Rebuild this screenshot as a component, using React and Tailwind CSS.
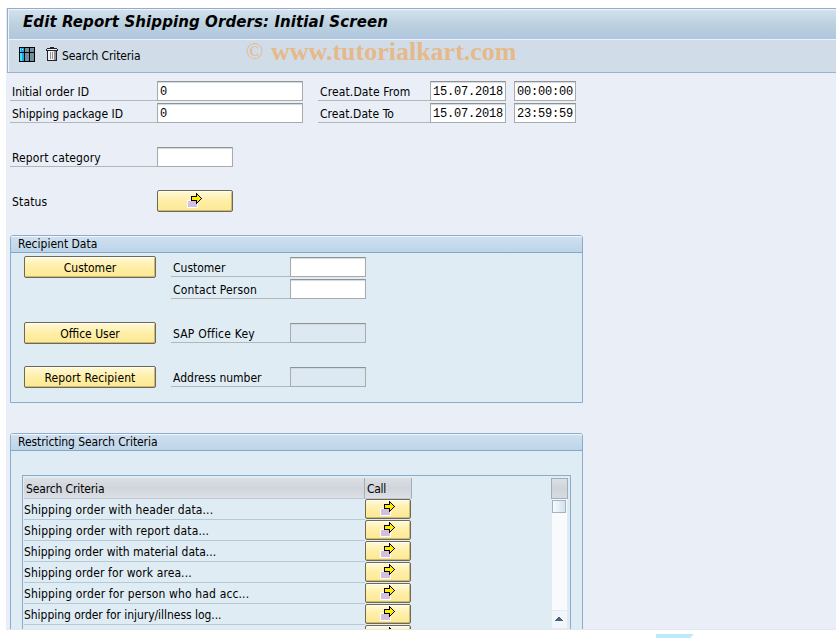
const SANS = "font-['DejaVu_Sans_Condensed','DejaVu_Sans',sans-serif] [font-stretch:condensed]";

const criteria = [
  { text: "Shipping order with header data...", spacing: "tracking-[0.12px]" },
  { text: "Shipping order with report data...", spacing: "tracking-[0.15px]" },
  { text: "Shipping order with material data...", spacing: "tracking-normal" },
  { text: "Shipping order for work area...", spacing: "tracking-[0.09px]" },
  { text: "Shipping order for person who had acc...", spacing: "tracking-[0.14px]" },
  { text: "Shipping order for injury/illness log...", spacing: "tracking-[-0.04px]" },
  { text: "", spacing: "tracking-normal" },
];

const ArrowIcon = ({ className = "" }) => (
  <svg width="16" height="15" viewBox="-1 0 16 15" shapeRendering="crispEdges" className={className}>
    <path d="M-1 7h11v8H-1z" fill="#fff" />
    <path d="M0 8h9v6H0z" fill="#d5bfdf" />
    <path d="M3 3h5V0h1v1h1v1h1v1h1v1h1v1h1v1h-1v1h-1v1h-1v1h-1v1H9v1H8V8H3z" fill="#000" />
    <path d="M4 4h5V2h1v1h1v1h1v1h1v1h-1v1h-1v1h-1v1H9V7H4z" fill="#ffeb00" />
  </svg>
);

const TableIcon = () => (
  <svg width="16" height="16" viewBox="0 0 16 16" shapeRendering="crispEdges">
    <path d="M0 0h16v15H0z" fill="#000" />
    <path d="M1 1h4v4H1zM1 6h4v8H1z" fill="#1ea4ee" />
    <path d="M1 1h1v4H1zM1 6h2v8H1z" fill="#3fe0fb" />
    <path d="M3 2h1v1H3z" fill="#fff" />
    <path d="M6 1h4v4H6zM11 1h4v4h-4zM6 6h4v8H6zM11 6h4v8h-4z" fill="#73909f" />
  </svg>
);

const TrashIcon = () => (
  <svg width="12" height="14" viewBox="0 0 12 14" shapeRendering="crispEdges">
    <path d="M4 0h4v1h3v1h1v2h-1v10H1V4H0V2h1V1h3z" fill="#222" />
    <path d="M1 2h10v1H1zM2 4h8v9H2z" fill="#f1f1f1" />
    <path d="M4 5h1v7H4zM6 5h1v7H6zM8 4h2v9H8z" fill="#8d8f94" />
    <path d="M0 4h1v10H0zM11 4h1v10h-1z" fill="#d0dde8" />
  </svg>
);

const Input = ({ value = "", disabled = false, className = "" }) => (
  <div
    className={`h-5 shrink-0 border border-[#a7abae] border-t-[#8f9396] pl-[2px] font-['Liberation_Mono',monospace] text-[12px] leading-[20px] tracking-[-0.2px] whitespace-nowrap text-black shadow-[inset_0_1px_1px_#d5d9dc] ${
      disabled ? "bg-[#dce9f3]" : "bg-white"
    } ${className}`}
  >
    {value}
  </div>
);

const Label = ({ children, className = "" }) => (
  <div className={`h-5 shrink-0 border-b border-[#b2b7ba] pl-[2px] leading-[22px] whitespace-nowrap ${className}`}>
    {children}
  </div>
);

const Button = ({ children, className = "" }) => (
  <button
    className={`flex shrink-0 justify-center rounded-[2px] border border-[#6d6857] bg-linear-to-b from-[#fff9d8] via-[#ffeea6] to-[#fbe993] shadow-[inset_0_1px_0_#fffdf0,inset_-1px_-1px_0_#cdb972] ${className}`}
  >
    {children}
  </button>
);

const Group = ({ title, children, className = "" }) => (
  <section className={`ml-1 w-[573px] rounded-t-[3px] border border-[#8bacca] bg-[#dfecf4] ${className}`}>
    <h2 className="h-[17px] rounded-t-[2px] border-b border-[#87a6c6] bg-linear-to-b from-[#cfe0f0] to-[#bdd5ea] pl-[7px] leading-[16px] shadow-[inset_0_1px_0_#f1f7fc]">
      {title}
    </h2>
    {children}
  </section>
);

const RecipientRow = ({ button, label, disabled, labelClass = "", className = "" }) => (
  <div className={`flex h-[22px] ${className}`}>
    <div className="mr-[15px] w-[132px]">
      {button && <Button className="h-[22px] w-full leading-[22px]">{button}</Button>}
    </div>
    <Label className={`mt-px w-[119px] ${labelClass}`}>{label}</Label>
    <Input disabled={disabled} className="mt-px w-[76px]" />
  </div>
);

const Header = () => (
  <header className="ml-px">
    <div className="h-8 border-t border-l border-[#95abc7] bg-linear-to-b from-[#d3e3ef] via-[#bdd0de] to-[#aec6e0] shadow-[inset_1px_1px_0_#edf4fa,inset_0_-1px_0_#edf4fa]">
      <h1 className="pl-[15px] font-['DejaVu_Sans',sans-serif] text-[15px] leading-[27px] font-bold tracking-[0.09px] whitespace-nowrap italic [font-stretch:normal]">
        Edit Report Shipping Orders: Initial Screen
      </h1>
    </div>
    <div className="flex h-[33px] border-b border-l border-[#9db2cc] bg-[#d0dde8] shadow-[inset_1px_0_0_#edf4fa]">
      <div className="mt-[7px] ml-[11px] w-[27px]">
        <TableIcon />
      </div>
      <div className="mt-[7px] w-[16px]">
        <TrashIcon />
      </div>
      <span className="mt-[7px] w-[184px] leading-[18px] tracking-[-0.13px]">Search Criteria</span>
      <div className="flex font-['Liberation_Serif',serif] text-[#e6b98a]">
        <span className="w-[25px] text-[23px] leading-[24px]">©</span>
        <span className="text-[26px] leading-[24px] font-bold">www.tutorialkart.com</span>
      </div>
    </div>
  </header>
);

const SearchTable = () => (
  <div className="mt-6 ml-[11px] flex h-[200px] w-[549px] border border-[#8bacca] pt-[2px] pl-px">
    <div className="w-[388px]">
      <div className="flex h-[21px] border-b border-[#bdc8d3] bg-linear-to-b from-[#dce0e3] via-[#d0d4dc] to-[#dce0e5] leading-[22px]">
        <div className="w-[341px] border-r border-[#a2adba] pl-[2px] tracking-[-0.13px]">Search Criteria</div>
        <div className="w-[47px] border-r border-[#a2adba] pl-[2px] tracking-[-0.3px]">Call</div>
      </div>
      {criteria.map((row, index) => (
        <div key={index} className="flex h-[21px]">
          <div className={`w-[341px] border-b border-[#b7c8d7] leading-[22px] whitespace-nowrap ${row.spacing}`}>
            {row.text}
          </div>
          <Button className="h-5 w-[46px]">
            <ArrowIcon className="mt-px" />
          </Button>
        </div>
      ))}
    </div>
    <div className="ml-[139px] w-[17px]">
      <div className="h-[21px] border border-[#a2adba] bg-linear-to-b from-[#dce0e3] via-[#cfd4db] to-[#d8dce2]" />
      <div className="ml-px h-[111px] w-[15px] bg-[#f8fafc] pt-px">
        <div className="h-[13px] w-[14px] border border-[#9fb3c6] bg-linear-to-r from-[#f8fbfd] to-[#d3e3ee]" />
      </div>
      <div className="mt-px ml-px h-[17px] w-[15px] bg-[#f2f6fb] pt-[6px] pl-[3px]">
        <svg width="8" height="4" viewBox="0 0 8 4" shapeRendering="crispEdges">
          <path d="M3 0h2v1h1v1h1v1h1v1H0V3h1V2h1V1h1z" fill="#4a637c" />
        </svg>
      </div>
    </div>
  </div>
);

const App = () => {
  return (
    <div className={`h-[638px] w-[836px] overflow-hidden bg-white pt-2 pl-[6px] text-[12px] text-black ${SANS}`}>
      <main className="h-[622px] overflow-hidden border-b border-[#e4e7eb] bg-[#eaeff7]">
        <Header />

        {/* Selection fields */}
        <div className="mt-2 ml-1 flex flex-col gap-[2px]">
          <div className="flex">
            <Label className="w-[147px]">Initial order ID</Label>
            <Input value="0" className="mr-[15px] w-[146px]" />
            <Label className="w-[112px] tracking-[0.13px]">Creat.Date From</Label>
            <Input value="15.07.2018" className="mr-2 w-[76px]" />
            <Input value="00:00:00" className="w-[62px]" />
          </div>
          <div className="flex">
            <Label className="w-[147px]">Shipping package ID</Label>
            <Input value="0" className="mr-[15px] w-[146px]" />
            <Label className="w-[112px] tracking-[0.07px]">Creat.Date To</Label>
            <Input value="15.07.2018" className="mr-2 w-[76px]" />
            <Input value="23:59:59" className="w-[62px]" />
          </div>
        </div>
        <div className="mt-6 ml-1 flex">
          <Label className="w-[147px] tracking-[0.13px]">Report category</Label>
          <Input className="w-[76px]" />
        </div>
        <div className="mt-[23px] ml-1 flex h-[22px]">
          <span className="w-[147px] pl-[2px] leading-[24px] tracking-[0.15px]">Status</span>
          <Button className="h-[22px] w-[76px]">
            <ArrowIcon className="mt-[2px]" />
          </Button>
        </div>

        <Group title="Recipient Data" className="mt-[23px] h-[168px]">
          <div className="mt-[3px] ml-[13px]">
            <RecipientRow button="Customer" label="Customer" />
            <RecipientRow label="Contact Person" labelClass="tracking-[0.17px]" />
            <RecipientRow
              button="Office User"
              label="SAP Office Key"
              labelClass="tracking-[0.2px]"
              disabled
              className="mt-[22px]"
            />
            <RecipientRow
              button={<span className="tracking-[0.1px]">Report Recipient</span>}
              label="Address number"
              disabled
              className="mt-[22px]"
            />
          </div>
        </Group>

        <Group title="Restricting Search Criteria" className="mt-[30px] h-[240px] tracking-[-0.08px]">
          <SearchTable />
        </Group>
      </main>
      <svg width="38" height="4" viewBox="0 0 38 4" className="mt-1 ml-[650px]">
        <path d="M0 0h38l-4 4H0z" fill="#bdeaf8" />
      </svg>
    </div>
  );
};

export default App;
